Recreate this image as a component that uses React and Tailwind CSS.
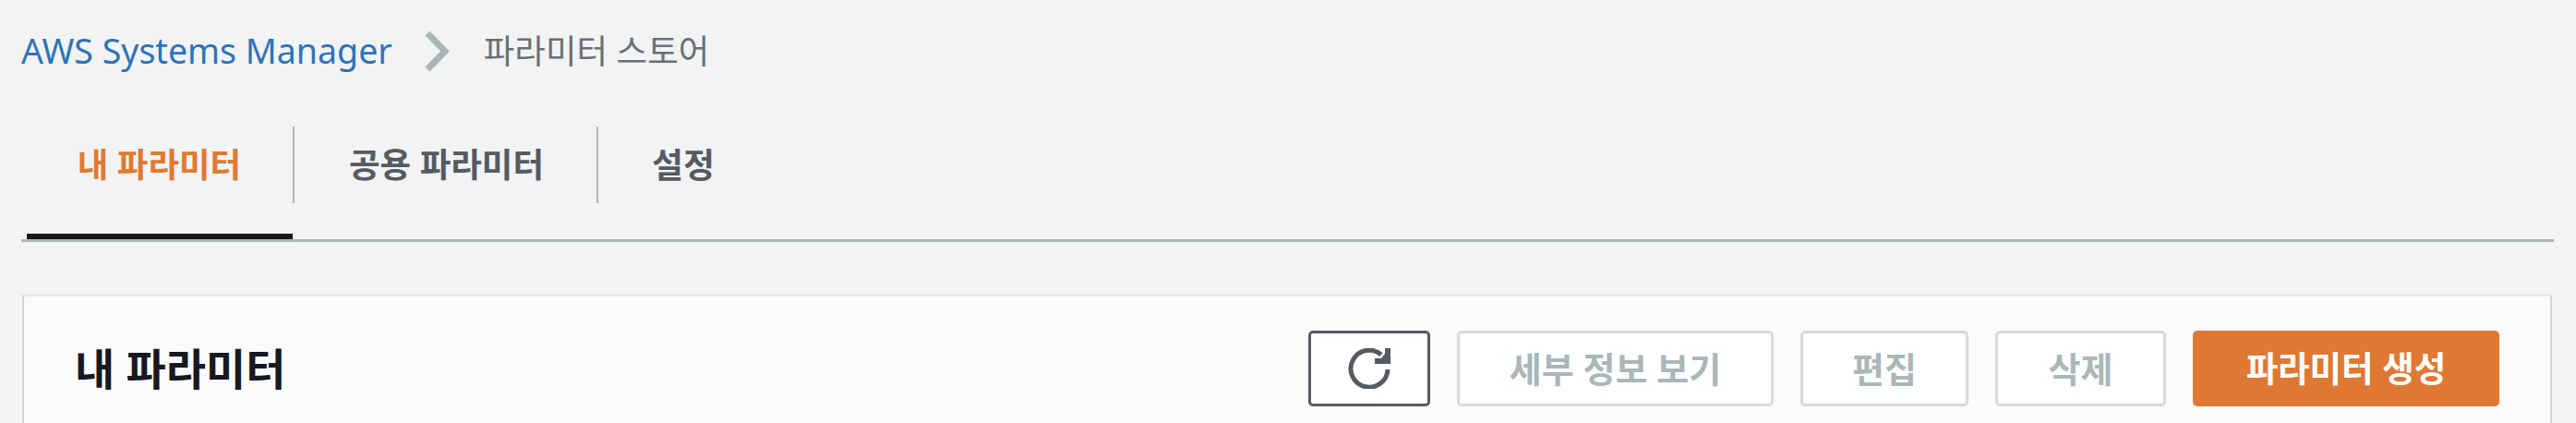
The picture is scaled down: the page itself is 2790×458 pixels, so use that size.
const KR = "font-['Noto_Sans','Noto_Sans_CJK_KR',sans-serif]";

function RefreshIcon() {
  return (
    <svg viewBox="0 0 46 44" className="w-[46px] h-[44px]" fill="none">
      <path d="M36 7 A20 20 0 1 0 43 23" stroke="#545b64" strokeWidth="5" />
      <path d="M46 0 V17 H29 V11 H36 L40 6 V0 Z" fill="#545b64" />
    </svg>
  );
}

function DisabledButton({ label, width }) {
  return (
    <button
      className={`h-[82px] ${width} flex items-center justify-center bg-white border-[3px] border-[#d5dbdb] rounded-[5px] text-[38px] font-bold text-[#aab7b8]`}
    >
      {label}
    </button>
  );
}

export default function App() {
  return (
    <div className={`w-[2790px] h-[458px] overflow-hidden bg-[#f2f3f3] ${KR}`}>
      {/* breadcrumb */}
      <div className="h-[110px] pl-[23px] flex items-center">
        <span className="text-[37.5px] text-[#2f72b7]">AWS Systems Manager</span>
        <svg viewBox="0 0 27 43" className="w-[27px] h-[43px] ml-[35px] mr-[37px]" fill="none">
          <path d="M3 2 L22 21.5 L3 41" stroke="#aab7b8" strokeWidth="7" />
        </svg>
        <span className="text-[36.5px] text-[#687078]">파라미터 스토어</span>
      </div>

      {/* tabs */}
      <div className="relative ml-[23px] mr-[24px] h-[152px] border-b-[3px] border-[#aab7b8] flex items-start pt-[27px]">
        <div className="w-[296px] h-[83px] pl-[5px] flex items-center justify-center border-r-[2px] border-[#aab7b8] text-[36.5px] font-bold text-[#e07a30]">
          내 파라미터
        </div>
        <div className="w-[329px] h-[83px] pl-[2px] flex items-center justify-center border-r-[2px] border-[#aab7b8] text-[36.5px] font-bold text-[#545b64]">
          공용 파라미터
        </div>
        <div className="w-[184px] h-[83px] flex items-center justify-center text-[37px] font-bold text-[#545b64]">
          설정
        </div>
        <div className="absolute left-[6px] bottom-[0px] w-[288px] h-[6px] bg-[#16191f]"></div>
      </div>

      {/* card */}
      <div className="ml-[24px] mr-[26px] mt-[57px] h-[200px] bg-[#fbfbfb] border-t-[2px] border-x-[2px] border-t-[#e8eaea] border-x-[#d0d5d5] flex items-start justify-between pl-[55px] pr-[55px] pt-[37px]">
        <h1 className="text-[47px] leading-[82px] font-bold text-[#16191f]">내 파라미터</h1>
        <div className="flex gap-[29px]">
          <button className="h-[82px] w-[132px] flex items-center justify-center bg-white border-[3px] border-[#545b64] rounded-[5px]">
            <RefreshIcon />
          </button>
          <DisabledButton label="세부 정보 보기" width="w-[343px]" />
          <DisabledButton label="편집" width="w-[182px]" />
          <DisabledButton label="삭제" width="w-[185px]" />
          <button className="h-[82px] w-[332px] flex items-center justify-center bg-[#df7833] rounded-[5px] text-[37.5px] font-bold text-white">
            파라미터 생성
          </button>
        </div>
      </div>
    </div>
  );
}
